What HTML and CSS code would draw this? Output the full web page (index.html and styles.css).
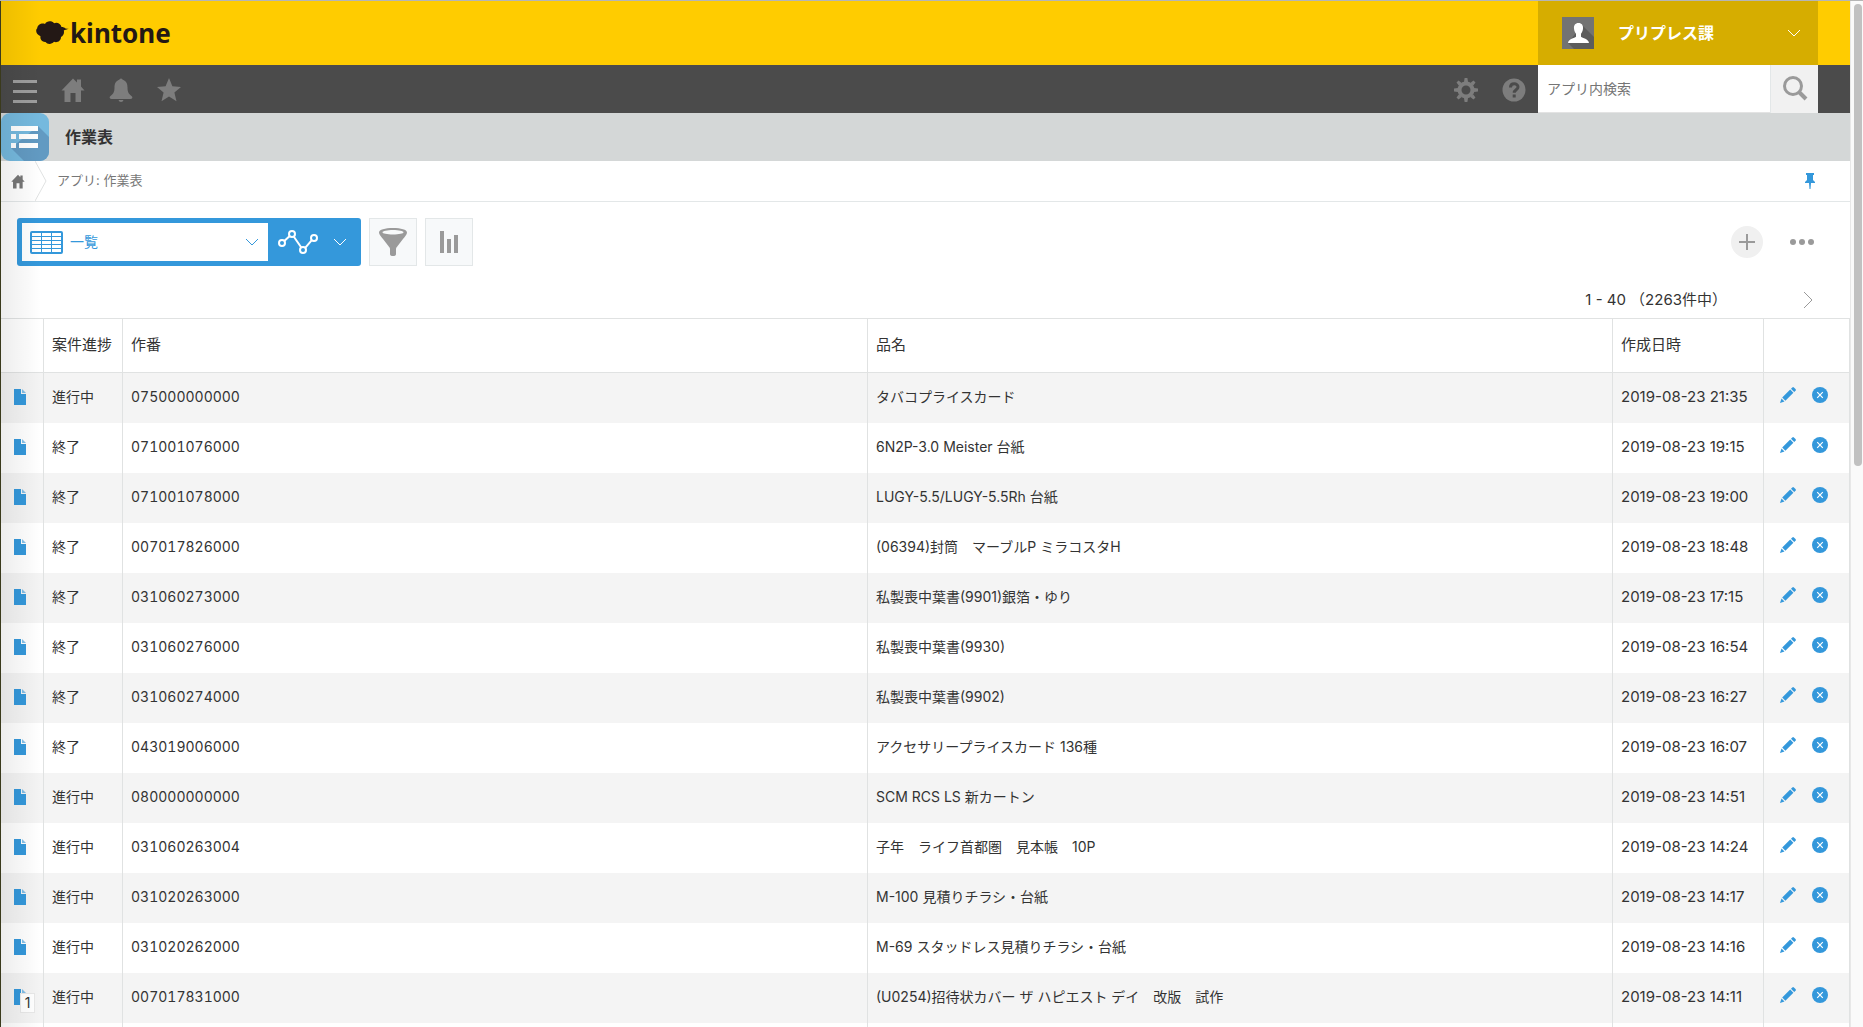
FILE: index.html
```html
<!DOCTYPE html>
<html lang="ja">
<head>
<meta charset="utf-8">
<meta name="viewport" content="width=device-width, initial-scale=1">
<title>作業表 - kintone</title>
<link rel="stylesheet" href="styles.css">
</head>
<body>
<svg class="sprite" aria-hidden="true">
  <symbol id="i-home" viewBox="0 0 24 24"><path d="M12 0.500L16 4.500V1.500h4v7l3.500 4H20V24h-5.500v-9h-5v9H3.500V12.500H.5z"/></symbol>
  <symbol id="i-chev" viewBox="0 0 14 8"><path d="M1 1l6 6 6-6" fill="none" stroke="currentColor"/></symbol>
  <symbol id="i-doc" viewBox="0 0 12 16"><path d="M0 0h7v5h5v11H0z"/><path d="M8 0l4 4H8z" opacity=".6"/></symbol>
  <symbol id="i-pencil" viewBox="0 0 16 16"><path d="M0 16l1.500-4.500 3 3zM2.200 10.500l8-8 3.200 3.200-8 8zM11 1.800l1.300-1.300q.8-.8 1.600 0l1.600 1.600q.8.800 0 1.600L14.200 5z"/></symbol>
  <symbol id="i-close" viewBox="0 0 16 16"><circle cx="8" cy="8" r="8"/><path d="M5.200 5.200l5.600 5.600M10.800 5.200l-5.600 5.600" stroke="#fff" stroke-width="1.200"/></symbol>
</svg>
<div class="app">
  <header class="brand-bar">
    <a class="logo" href="#">
      <svg width="33" height="24" viewBox="0 0 33 24"><path d="M9 3C10.500-.2 16-.6 18 2.300c3-1.500 6.800.4 7.500 3.700 1.500-.1 3 .6 4 1.400 1.100.2 2.300.1 3.200.3-2 .8-3.600 1-4.900 1.700.8 3.300-.8 5.700-2.800 6.600 0 4-4 6.200-7 4.800-2.500 2.800-6.500 2.700-8.500.2-3.500.3-5.700-2.700-5-5.800C-.2 13.200-.7 9 1.200 7.300 1.600 3.900 5.500 1.700 9 3z"/></svg>
      <span>kintone</span>
    </a>
    <button class="user" type="button">
      <svg class="avatar" width="32" height="32" viewBox="0 0 32 32"><path fill="#737373" d="M0 0h32v32H0z"/><path fill="#5c5c5c" d="M20 8l12 12v12H12L6 26z"/><path fill="#fff" d="M16.500 6c3.200 0 4.900 2.400 4.500 5.500-.2 2.500-1 4-2 5.200v3c1.500 1.700 7.500 1.800 8 6.300H6c.5-4.500 6.500-4.600 8-6.300v-3c-1-1.200-1.800-2.700-2-5.200C11.600 8.400 13.300 6 16.500 6z"/></svg>
      <span class="user-name">プリプレス課</span>
      <svg class="chev" width="14" height="8"><use href="#i-chev"/></svg>
    </button>
  </header>

  <nav class="tool-bar">
    <button class="nav-btn menu" type="button" aria-label="メニュー"><svg width="24" height="26"><path d="M0 3h24v3H0zM0 13h24v3H0zM0 23h24v3H0z"/></svg></button>
    <a class="nav-btn" href="#" aria-label="ホーム"><svg width="24" height="24"><use href="#i-home"/></svg></a>
    <button class="nav-btn" type="button" aria-label="通知"><svg width="24" height="24" viewBox="0 0 24 24"><path d="M10.500 1.500Q12-.5 13.500 1.500C17.500 3 18.500 6 18.500 9.500c0 5 1.500 6.500 4 8.500 1.500 1.300 1 3-1 3h-19c-2 0-2.500-1.700-1-3 2.500-2 4-3.500 4-8.500 0-3.500 1-6.500 5-8zM9.500 22h5q-.5 2-2.500 2t-2.500-2z"/></svg></button>
    <button class="nav-btn" type="button" aria-label="お気に入り"><svg width="24" height="24" viewBox="0 0 24 24"><path d="M12 0l3.400 8.200 8.600.7-6.600 5.700 2.100 8.700L12 18.600l-7.500 4.700 2.100-8.700L0 8.900l8.600-.7z"/></svg></button>
    <span class="spacer"></span>
    <button class="nav-btn" type="button" aria-label="設定"><svg width="24" height="24" viewBox="-12 -12 24 24"><g><path id="tooth" d="M-2-8l.6-4h2.800l.6 4z"/><use href="#tooth" transform="rotate(45)"/><use href="#tooth" transform="rotate(90)"/><use href="#tooth" transform="rotate(135)"/><use href="#tooth" transform="rotate(180)"/><use href="#tooth" transform="rotate(225)"/><use href="#tooth" transform="rotate(270)"/><use href="#tooth" transform="rotate(315)"/></g><circle r="6.500" fill="none" stroke="currentColor" stroke-width="4"/></svg></button>
    <button class="nav-btn" type="button" aria-label="ヘルプ"><svg width="24" height="24" viewBox="0 0 24 24"><circle cx="12" cy="12" r="11.500"/><path d="M8.500 9.500c0-5 7.500-4.600 7.500-.5 0 2.700-3.800 2.800-3.800 5.800M12.200 16.500v3" fill="none" stroke="#4b4b4b" stroke-width="3"/></svg></button>
    <form class="search">
      <input type="search" aria-label="アプリ内検索" placeholder="アプリ内検索">
      <button type="button" aria-label="検索"><svg width="26" height="26" viewBox="0 0 26 26" fill="none" stroke="#9a9a9a"><circle cx="11" cy="10" r="8.500" stroke-width="3"/><path d="M17 16l7 7" stroke-width="4"/></svg></button>
    </form>
  </nav>

  <div class="title-bar">
    <svg class="app-icon" width="48" height="48" viewBox="0 0 48 48"><defs><clipPath id="round"><rect width="48" height="48" rx="9"/></clipPath></defs><g clip-path="url(#round)"><path fill="#75b9de" d="M0 0h48v48H0z"/><path fill="#629ac2" d="M37 13l11 11v24H23L10 35z"/></g><path fill="#fff" d="M10 13h27v5H10zM10 21h5v5h-5zM18 21h19v5H18zM10 30h5v5h-5zM18 30h19v5H18z"/></svg>
    <h1>作業表</h1>
  </div>

  <nav class="crumbs">
    <a class="crumb-home" href="#" aria-label="ホーム"><svg width="14" height="15"><use href="#i-home"/></svg></a>
    <svg class="crumb-sep" width="12" height="40" viewBox="0 0 12 40"><path d="M0 0l11 20L0 40" fill="none" stroke="#e0e2e2"/></svg>
    <a class="crumb" href="#">アプリ: 作業表</a>
    <button class="pin" type="button" aria-label="固定"><svg width="10" height="16" viewBox="0 0 10 16"><path d="M1 0h8v2H8v5l2 2v1H6l-.5 6h-1L4 10H0V9l2-2V2H1z"/></svg></button>
  </nav>

  <main>
    <div class="controls">
      <div class="view-box">
        <label class="view-select">
          <svg width="33" height="23" viewBox="0 0 33 23" fill="none" stroke="#3498db"><rect x="1" y="1" width="31" height="21" rx="1" stroke-width="2"/><path d="M1 5.500h31M1 9.500h31M1 13.500h31M1 17.500h31M11.500 1v21M21.500 1v21"/></svg>
          <select aria-label="一覧を選択"><option>一覧</option></select>
          <svg width="14" height="8"><use href="#i-chev"/></svg>
        </label>
        <button class="graph" type="button" aria-label="グラフ">
          <svg width="40" height="24" viewBox="0 0 40 24" fill="none" stroke="#fff" stroke-width="2"><circle cx="4" cy="13" r="3"/><circle cx="14" cy="4" r="3"/><circle cx="25" cy="20" r="3"/><circle cx="36" cy="8" r="3"/><path d="M6.300 11l5.400-5M15.700 6.500l7.600 11M27.200 17.800l6.600-7.600"/></svg>
          <svg width="14" height="8"><use href="#i-chev"/></svg>
        </button>
      </div>
      <button class="square" type="button" aria-label="絞り込む"><svg width="28" height="28" viewBox="0 0 28 28"><path fill-rule="evenodd" d="M14 0c8 0 14 1.500 14 4.500 0 2-2 4-4 6.500l-5 6.500c-1 1.300-2 2-2 3.500v5q0 2-3 2t-3-2v-5c0-1.500-1-2.200-2-3.500L4 11C2 8.500 0 6.500 0 4.500 0 1.500 6 0 14 0zm0 2C8 2 3.500 3 3.500 4.300S8 6.500 14 6.500s10.500-.9 10.500-2.200S20 2 14 2z"/></svg></button>
      <button class="square" type="button" aria-label="集計"><svg width="18" height="22"><path d="M0 0h4v22H0zM7 8h4v14H7zM14 4h4v18h-4z"/></svg></button>
      <span class="spacer"></span>
      <button class="add" type="button" aria-label="追加"><svg width="16" height="16"><path d="M7 0h2v7h7v2H9v7H7V9H0V7h7z"/></svg></button>
      <button class="more" type="button" aria-label="その他"><svg width="24" height="6"><circle cx="3" cy="3" r="3"/><circle cx="12" cy="3" r="3"/><circle cx="21" cy="3" r="3"/></svg></button>
    </div>

    <div class="pager">
      <span>1 - 40 （2263件中）</span>
      <a href="#" aria-label="次へ"><svg width="10" height="18" viewBox="0 0 10 18"><path d="M1 1l8 8-8 8" fill="none" stroke="#9a9a9a"/></svg></a>
    </div>

    <table class="records">
      <colgroup><col class="c-doc"><col class="c-status"><col><col><col class="c-date"><col class="c-act"></colgroup>
      <thead><tr><th></th><th>案件進捗</th><th>作番</th><th>品名</th><th>作成日時</th><th></th></tr></thead>
      <tbody>
        <tr><td><a class="doc" href="#" aria-label="詳細"><svg width="12" height="16"><use href="#i-doc"/></svg></a></td><td>進行中</td><td class="num">075000000000</td><td>タバコプライスカード</td><td class="date">2019-08-23 21:35</td><td><div class="acts"><button type="button" aria-label="編集"><svg width="16" height="16"><use href="#i-pencil"/></svg></button><button type="button" aria-label="削除"><svg width="16" height="16"><use href="#i-close"/></svg></button></div></td></tr>
        <tr><td><a class="doc" href="#" aria-label="詳細"><svg width="12" height="16"><use href="#i-doc"/></svg></a></td><td>終了</td><td class="num">071001076000</td><td>6N2P-3.0 Meister 台紙</td><td class="date">2019-08-23 19:15</td><td><div class="acts"><button type="button" aria-label="編集"><svg width="16" height="16"><use href="#i-pencil"/></svg></button><button type="button" aria-label="削除"><svg width="16" height="16"><use href="#i-close"/></svg></button></div></td></tr>
        <tr><td><a class="doc" href="#" aria-label="詳細"><svg width="12" height="16"><use href="#i-doc"/></svg></a></td><td>終了</td><td class="num">071001078000</td><td>LUGY-5.5/LUGY-5.5Rh 台紙</td><td class="date">2019-08-23 19:00</td><td><div class="acts"><button type="button" aria-label="編集"><svg width="16" height="16"><use href="#i-pencil"/></svg></button><button type="button" aria-label="削除"><svg width="16" height="16"><use href="#i-close"/></svg></button></div></td></tr>
        <tr><td><a class="doc" href="#" aria-label="詳細"><svg width="12" height="16"><use href="#i-doc"/></svg></a></td><td>終了</td><td class="num">007017826000</td><td>(06394)封筒　マーブルP ミラコスタH</td><td class="date">2019-08-23 18:48</td><td><div class="acts"><button type="button" aria-label="編集"><svg width="16" height="16"><use href="#i-pencil"/></svg></button><button type="button" aria-label="削除"><svg width="16" height="16"><use href="#i-close"/></svg></button></div></td></tr>
        <tr><td><a class="doc" href="#" aria-label="詳細"><svg width="12" height="16"><use href="#i-doc"/></svg></a></td><td>終了</td><td class="num">031060273000</td><td>私製喪中葉書(9901)銀箔・ゆり</td><td class="date">2019-08-23 17:15</td><td><div class="acts"><button type="button" aria-label="編集"><svg width="16" height="16"><use href="#i-pencil"/></svg></button><button type="button" aria-label="削除"><svg width="16" height="16"><use href="#i-close"/></svg></button></div></td></tr>
        <tr><td><a class="doc" href="#" aria-label="詳細"><svg width="12" height="16"><use href="#i-doc"/></svg></a></td><td>終了</td><td class="num">031060276000</td><td>私製喪中葉書(9930)</td><td class="date">2019-08-23 16:54</td><td><div class="acts"><button type="button" aria-label="編集"><svg width="16" height="16"><use href="#i-pencil"/></svg></button><button type="button" aria-label="削除"><svg width="16" height="16"><use href="#i-close"/></svg></button></div></td></tr>
        <tr><td><a class="doc" href="#" aria-label="詳細"><svg width="12" height="16"><use href="#i-doc"/></svg></a></td><td>終了</td><td class="num">031060274000</td><td>私製喪中葉書(9902)</td><td class="date">2019-08-23 16:27</td><td><div class="acts"><button type="button" aria-label="編集"><svg width="16" height="16"><use href="#i-pencil"/></svg></button><button type="button" aria-label="削除"><svg width="16" height="16"><use href="#i-close"/></svg></button></div></td></tr>
        <tr><td><a class="doc" href="#" aria-label="詳細"><svg width="12" height="16"><use href="#i-doc"/></svg></a></td><td>終了</td><td class="num">043019006000</td><td>アクセサリープライスカード 136種</td><td class="date">2019-08-23 16:07</td><td><div class="acts"><button type="button" aria-label="編集"><svg width="16" height="16"><use href="#i-pencil"/></svg></button><button type="button" aria-label="削除"><svg width="16" height="16"><use href="#i-close"/></svg></button></div></td></tr>
        <tr><td><a class="doc" href="#" aria-label="詳細"><svg width="12" height="16"><use href="#i-doc"/></svg></a></td><td>進行中</td><td class="num">080000000000</td><td>SCM RCS LS 新カートン</td><td class="date">2019-08-23 14:51</td><td><div class="acts"><button type="button" aria-label="編集"><svg width="16" height="16"><use href="#i-pencil"/></svg></button><button type="button" aria-label="削除"><svg width="16" height="16"><use href="#i-close"/></svg></button></div></td></tr>
        <tr><td><a class="doc" href="#" aria-label="詳細"><svg width="12" height="16"><use href="#i-doc"/></svg></a></td><td>進行中</td><td class="num">031060263004</td><td>子年　ライフ首都圏　見本帳　10P</td><td class="date">2019-08-23 14:24</td><td><div class="acts"><button type="button" aria-label="編集"><svg width="16" height="16"><use href="#i-pencil"/></svg></button><button type="button" aria-label="削除"><svg width="16" height="16"><use href="#i-close"/></svg></button></div></td></tr>
        <tr><td><a class="doc" href="#" aria-label="詳細"><svg width="12" height="16"><use href="#i-doc"/></svg></a></td><td>進行中</td><td class="num">031020263000</td><td>M-100 見積りチラシ・台紙</td><td class="date">2019-08-23 14:17</td><td><div class="acts"><button type="button" aria-label="編集"><svg width="16" height="16"><use href="#i-pencil"/></svg></button><button type="button" aria-label="削除"><svg width="16" height="16"><use href="#i-close"/></svg></button></div></td></tr>
        <tr><td><a class="doc" href="#" aria-label="詳細"><svg width="12" height="16"><use href="#i-doc"/></svg></a></td><td>進行中</td><td class="num">031020262000</td><td>M-69 スタッドレス見積りチラシ・台紙</td><td class="date">2019-08-23 14:16</td><td><div class="acts"><button type="button" aria-label="編集"><svg width="16" height="16"><use href="#i-pencil"/></svg></button><button type="button" aria-label="削除"><svg width="16" height="16"><use href="#i-close"/></svg></button></div></td></tr>
        <tr><td><a class="doc" href="#" aria-label="詳細"><svg width="12" height="16"><use href="#i-doc"/></svg><span class="badge">1</span></a></td><td>進行中</td><td class="num">007017831000</td><td>(U0254)招待状カバー ザ ハピエスト デイ　改版　試作</td><td class="date">2019-08-23 14:11</td><td><div class="acts"><button type="button" aria-label="編集"><svg width="16" height="16"><use href="#i-pencil"/></svg></button><button type="button" aria-label="削除"><svg width="16" height="16"><use href="#i-close"/></svg></button></div></td></tr>
        <tr class="tail"><td></td><td></td><td></td><td></td><td></td><td></td></tr>
      </tbody>
    </table>
  </main>
</div>
<div class="scroll-track"><div class="scroll-thumb"></div></div>
</body>
</html>
```

FILE: styles.css
```css
* { box-sizing: border-box; }

body {
  margin: 0;
  min-height: 100vh;
  display: flex;
  border-top: 1px solid #b5b5b5;
  background: #fff;
  color: #333;
  font: 14px/20px Inter, "Noto Sans CJK JP", sans-serif;
}

button, input, select { font: inherit; color: inherit; }
button { margin: 0; padding: 0; border: 0; background: none; }
a { color: inherit; text-decoration: none; }
svg { display: block; flex: none; }
svg:not([fill]) { fill: currentColor; }

.sprite { position: absolute; width: 0; height: 0; }
.spacer { flex: 1; }

.app {
  position: relative;
  flex: 1;
  min-width: 0;
  border-left: 1px solid #3a3a1c;
}

/* soft shade cast by the window edge */
.app::after {
  content: "";
  position: absolute;
  inset: 0 auto 0 0;
  width: 40px;
  background: linear-gradient(to right, rgba(0, 0, 0, .07), rgba(0, 0, 0, 0));
  pointer-events: none;
}

/* brand bar */
.brand-bar {
  display: flex;
  justify-content: space-between;
  height: 64px;
  padding-right: 32px;
  background: #ffcc00;
}
.logo {
  display: flex;
  align-items: center;
  gap: 1px;
  padding-left: 35px;
  color: #231815;
  font: 700 26px/32px "Noto Sans", "Open Sans", sans-serif;
}
.user {
  display: flex;
  align-items: center;
  width: 280px;
  padding: 0 17px 0 24px;
  background: #d6ad00;
  color: #fff;
  font-size: 16px;
  font-weight: 700;
}
.user-name { flex: 1; padding-left: 24px; text-align: left; }

/* dark tool bar */
.tool-bar {
  display: flex;
  height: 48px;
  padding-right: 32px;
  background: #4b4b4b;
}
.nav-btn {
  display: flex;
  align-items: center;
  justify-content: center;
  width: 48px;
  padding-top: 1px;
  color: #7d7d7d;
}
.menu { color: #9e9e9e; }
.search { display: flex; width: 280px; background: #fff; }
.search input {
  flex: 1;
  min-width: 0;
  padding: 0 9px;
  border: 0;
  border-bottom: 1px solid #e3e3e3;
  background: #fff;
  outline: 0;
  appearance: none;
}
.search input::placeholder { color: #757575; opacity: 1; }
.search button {
  display: flex;
  align-items: center;
  justify-content: center;
  width: 48px;
  border-left: 1px solid #e3e7e8;
  background: #f1f1f1;
}

/* app title */
.title-bar {
  display: flex;
  align-items: center;
  gap: 16px;
  height: 48px;
  background: #d4d7d7;
}
.title-bar h1 { margin: 0; font-size: 16px; line-height: 24px; }

/* breadcrumbs */
.crumbs {
  display: flex;
  align-items: center;
  height: 41px;
  padding-right: 35px;
  border-bottom: 1px solid #e3e7e8;
  color: #777;
  font-size: 13px;
}
.crumb-home { width: 34px; padding-left: 10px; }
.crumb { flex: 1; padding: 0 0 2px 10px; }
.pin { color: #3498db; }

/* view controls */
.controls {
  display: flex;
  align-items: center;
  gap: 8px;
  padding: 16px 36px 0 16px;
}
.view-box {
  display: flex;
  width: 344px;
  height: 48px;
  padding: 5px;
  border-radius: 3px;
  background: #3498db;
}
.view-select {
  display: flex;
  flex: 1;
  align-items: center;
  gap: 7px;
  padding: 0 9px 0 8px;
  background: #fff;
  color: #3498db;
}
.view-select select {
  flex: 1;
  min-width: 0;
  padding: 0;
  border: 0;
  background: none;
  appearance: none;
}
.graph {
  display: flex;
  align-items: center;
  gap: 15px;
  width: 88px;
  padding-left: 10px;
  color: #fff;
}
.square {
  display: flex;
  align-items: center;
  justify-content: center;
  width: 48px;
  height: 48px;
  border: 1px solid #e3e7e8;
  background: #f7f9fa;
  color: #9a9a9a;
}
.add {
  display: flex;
  align-items: center;
  justify-content: center;
  width: 32px;
  height: 32px;
  border-radius: 50%;
  background: #f0f0f0;
  color: #9a9a9a;
}
.more { padding-left: 19px; color: #9a9a9a; }

.pager {
  display: flex;
  align-items: center;
  justify-content: flex-end;
  gap: 76px;
  height: 52px;
  padding: 16px 37px 0 0;
  font-size: 15px;
}

/* record list */
.records {
  width: 100%;
  table-layout: fixed;
  border-collapse: separate;
  border-spacing: 0;
  border-top: 1px solid #e0e2e2;
}
.c-doc { width: 43px; }
.c-status { width: 79px; }
.c-date { width: 151px; }
.c-act { width: 86px; }
.records th, .records td {
  padding: 0 0 2px 8px;
  border-right: 1px solid #e0e2e2;
  text-align: left;
  white-space: nowrap;
}
.records th {
  height: 54px;
  border-bottom: 1px solid #e0e2e2;
  font-size: 15px;
  font-weight: 400;
}
.records td { height: 50px; }
.records tbody tr:nth-child(odd) { background: #f4f4f4; }
.records .num { font-variant-numeric: tabular-nums; }
.records .date { font-size: 15px; }
.records .tail td { height: 4px; }
.doc {
  position: relative;
  display: block;
  width: 12px;
  margin-left: 5px;
  color: #3498db;
}
.badge {
  position: absolute;
  top: 4px;
  left: 6px;
  width: 15px;
  border: 1px solid #e8e8e8;
  background: #fff;
  color: #333;
  line-height: 18px;
  text-align: center;
}
.acts {
  display: flex;
  gap: 16px;
  padding: 0 0 4px 8px;
  color: #3498db;
}

/* scroll bar */
.scroll-track {
  width: 13px;
  padding: 3px 1px 0 3px;
  border-left: 1px solid #e8e8e8;
  background: #fafafa;
}
.scroll-thumb {
  height: 45vh;
  border-radius: 4px;
  background: #c1c1c1;
}
```
